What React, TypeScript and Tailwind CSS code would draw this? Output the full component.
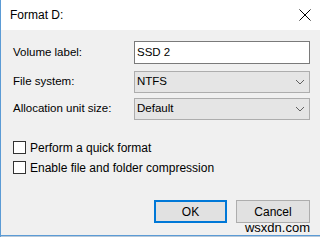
import React from "react";

function Chevron() {
  return (
    <svg width="10" height="6" viewBox="0 0 10 6" className="shrink-0">
      <path d="M1 1 L5 5 L9 1" fill="none" stroke="#606060" strokeWidth="1" />
    </svg>
  );
}

function Select({ value }: { value: string }) {
  return (
    <div className="h-[22px] w-[176px] bg-[#e5e5e5] border border-[#adadad] flex items-center justify-between pl-[2px] pr-[4px] text-[11.5px] text-black">
      <span>{value}</span>
      <Chevron />
    </div>
  );
}

function Check({ label }: { label: string }) {
  return (
    <div className="flex items-center h-[13px]">
      <div className="w-[13px] h-[13px] border border-[#333] bg-white shrink-0" />
      <span className="ml-[4px] text-[12px] text-black leading-none">{label}</span>
    </div>
  );
}

export default function App() {
  return (
    <div
      className="w-[320px] h-[237px] overflow-hidden relative bg-[#f0f0f0] border-l border-[#5b9bd5] flex flex-col"
      style={{ fontFamily: '"Liberation Sans", Arial, sans-serif' }}
    >
      <div className="h-[30px] bg-white flex items-center justify-between pl-[9px] pr-[9px] shrink-0">
        <span className="text-[12px] text-black">Format D:</span>
        <svg width="12" height="12" viewBox="0 0 12 12">
          <path d="M0.5 0.5 L11.5 11.5 M11.5 0.5 L0.5 11.5" stroke="#000" strokeWidth="1" />
        </svg>
      </div>
      <div className="flex-1 flex flex-col pl-[12px] pt-[11px]">
        <div className="flex items-center h-[23px]">
          <span className="w-[121px] text-[11.5px] text-black">Volume label:</span>
          <div className="h-[23px] w-[176px] bg-white border border-[#7a7a7a] flex items-center pl-[2px] text-[11.5px] text-black">
            SSD 2
          </div>
        </div>
        <div className="flex items-center h-[22px] mt-[7px]">
          <span className="w-[121px] text-[11.5px] text-black">File system:</span>
          <Select value="NTFS" />
        </div>
        <div className="flex items-center h-[22px] mt-[5px]">
          <span className="w-[121px] text-[11.5px] text-black">Allocation unit size:</span>
          <Select value="Default" />
        </div>
        <div className="flex flex-col gap-[7px] mt-[21px]">
          <Check label="Perform a quick format" />
          <Check label="Enable file and folder compression" />
        </div>
        <div className="flex justify-end gap-[9px] pr-[10px] mt-[26px]">
          <div className="w-[73px] h-[23px] bg-[#e1e1e1] border-2 border-[#0078d7] flex items-center justify-center text-[12px] text-black">
            OK
          </div>
          <div className="w-[74px] h-[23px] bg-[#e1e1e1] border border-[#adadad] flex items-center justify-center text-[12px] text-black">
            Cancel
          </div>
        </div>
        <div className="flex justify-end pr-[10px] h-[12px]">
          <span className="text-[13px] text-black leading-[12px] -mt-[1px]">wsxdn.com</span>
        </div>
      </div>
      <div className="h-[1px] bg-[#5b9bd5] shrink-0" />
      <div className="h-[2px] bg-[#b9c9d9] shrink-0" />
    </div>
  );
}
